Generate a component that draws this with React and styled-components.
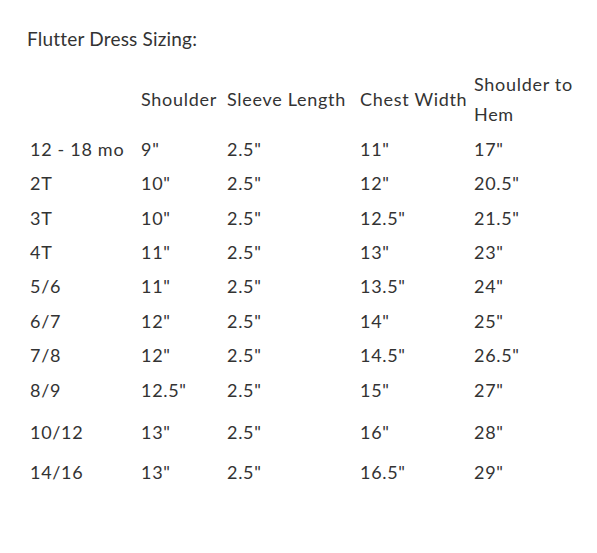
import styled, { createGlobalStyle } from 'styled-components';

const GlobalStyle = createGlobalStyle`
  html, body {
    margin: 0;
    padding: 0;
    background: #fff;
  }
`;

const Page = styled.div`
  padding: 24px 0 0 27px;
  font-family: Lato, "Liberation Sans", sans-serif;
  color: #333;
`;

const Title = styled.p`
  margin: 0 0 13px;
  font-size: 19px;
  line-height: 30px;
  letter-spacing: 0.2px;
`;

const SizeTable = styled.table`
  margin-left: 3px;
  border-collapse: collapse;
  table-layout: fixed;
  width: 554px;
  font-size: 18px;
  line-height: 30.4px;
  letter-spacing: 0.7px;
`;

const Col = styled.col`
  width: ${({ $w }) => $w}px;
`;

const HeadCell = styled.th`
  padding: 2px 0;
  font-weight: normal;
  text-align: left;
  vertical-align: middle;
`;

const Cell = styled.td`
  padding: ${({ $extra }) => 2 + ($extra || 0)}px 0 2px;
  vertical-align: top;
  white-space: nowrap;
`;

const widths = [111, 86, 133, 114, 110];
const headers = ['', 'Shoulder', 'Sleeve Length', 'Chest Width', 'Shoulder to Hem'];

const rows = [
  ['12 - 18 mo', '9"', '2.5"', '11"', '17"'],
  ['2T', '10"', '2.5"', '12"', '20.5"'],
  ['3T', '10"', '2.5"', '12.5"', '21.5"'],
  ['4T', '11"', '2.5"', '13"', '23"'],
  ['5/6', '11"', '2.5"', '13.5"', '24"'],
  ['6/7', '12"', '2.5"', '14"', '25"'],
  ['7/8', '12"', '2.5"', '14.5"', '26.5"'],
  ['8/9', '12.5"', '2.5"', '15"', '27"'],
  ['10/12', '13"', '2.5"', '16"', '28"', 8.2],
  ['14/16', '13"', '2.5"', '16.5"', '29"', 5.6],
];

export default function App() {
  return (
    <Page>
      <GlobalStyle />
      <Title>Flutter Dress Sizing:</Title>
      <SizeTable>
        <colgroup>
          {widths.map((w, i) => <Col key={i} $w={w} />)}
        </colgroup>
        <thead>
          <tr>
            {headers.map((h, i) => <HeadCell key={i}>{h}</HeadCell>)}
          </tr>
        </thead>
        <tbody>
          {rows.map((r) => (
            <tr key={r[0]}>
              {r.slice(0, 5).map((c, i) => (
                <Cell key={i} $extra={r[5]}>{c}</Cell>
              ))}
            </tr>
          ))}
        </tbody>
      </SizeTable>
    </Page>
  );
}
